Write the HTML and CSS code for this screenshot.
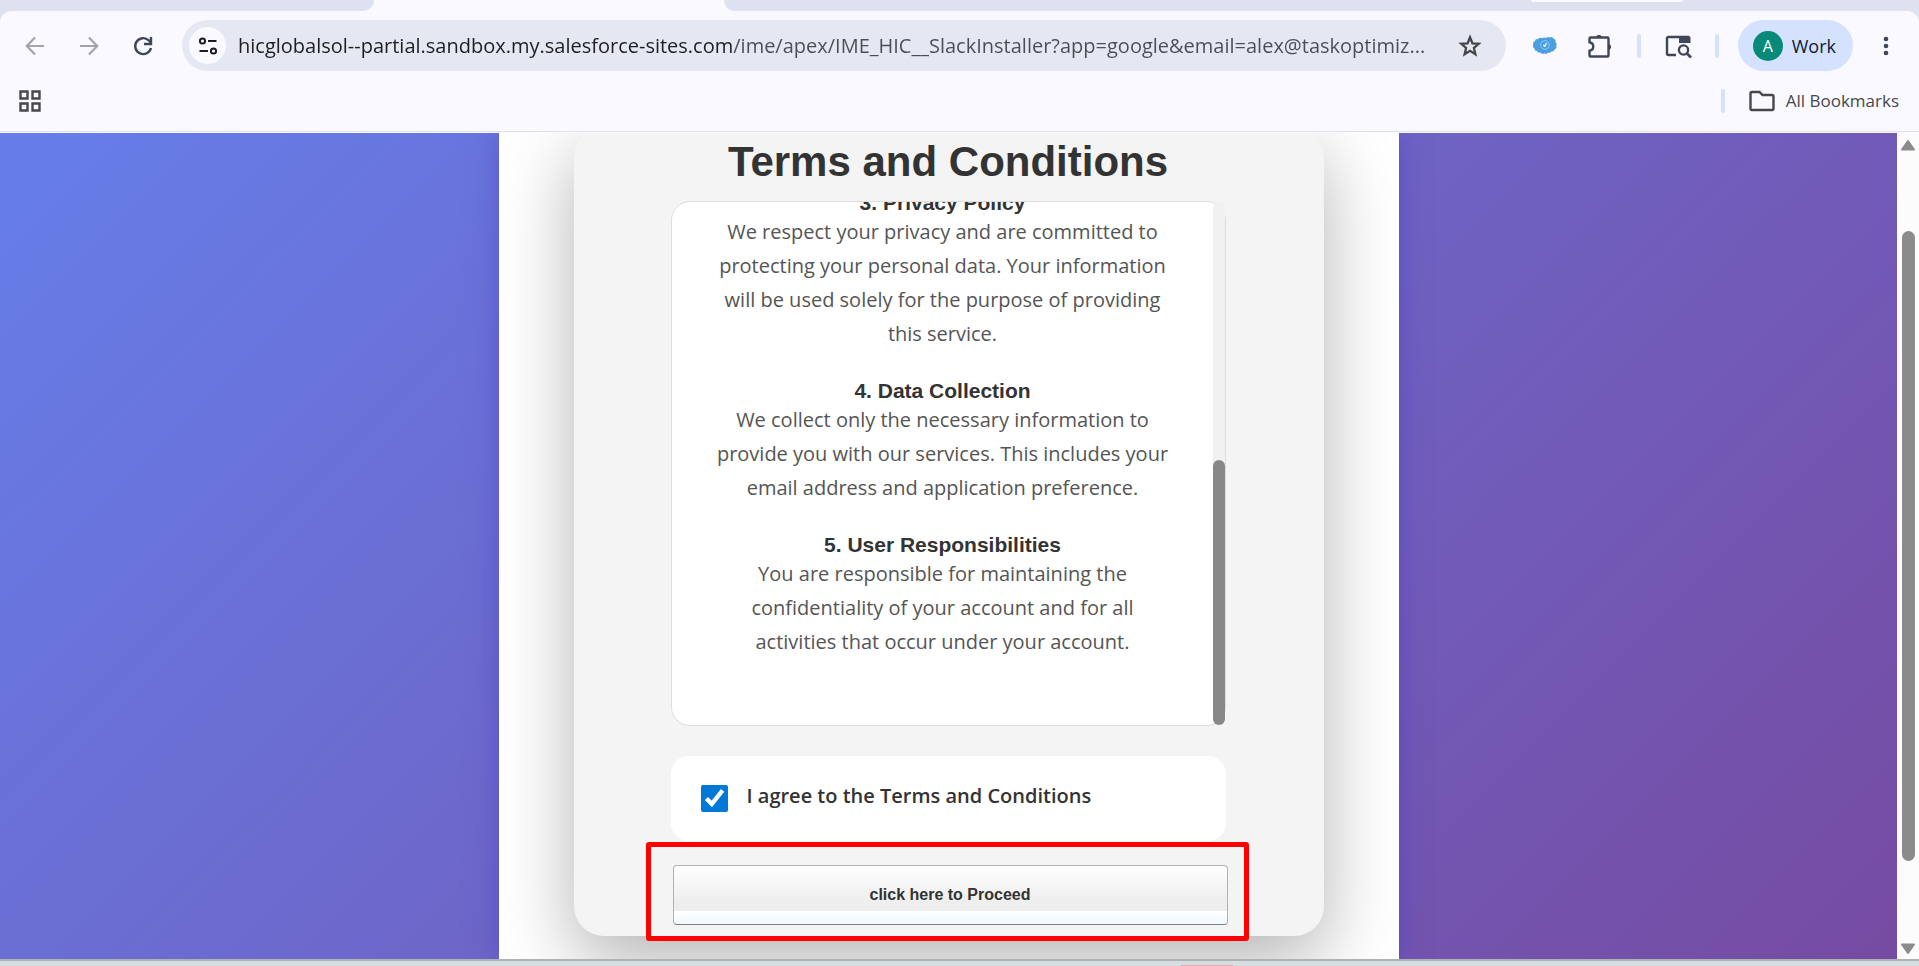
FILE: index.html
```html
<!DOCTYPE html>
<html lang="en">
<head>
<meta charset="utf-8">
<title>Terms and Conditions</title>
<link rel="stylesheet" href="styles.css">
</head>
<body>
<header class="browser">
  <div class="tab-strip">
    <div class="tab tab-left"></div>
    <div class="tab-active"></div>
    <div class="tab tab-right"><span class="tab-notch"></span></div>
  </div>
  <div class="chrome">
    <nav class="toolbar" aria-label="Browser toolbar">
      <div class="nav-buttons">
        <button class="icon-button muted" aria-label="Back"><svg width="20" height="20" viewBox="0 0 20 20" fill="none" stroke="currentColor" stroke-width="2.200"><path d="M19 10H2M10 1.500 1.800 10 10 18.500"/></svg></button>
        <button class="icon-button muted" aria-label="Forward"><svg width="20" height="20" viewBox="0 0 20 20" fill="none" stroke="currentColor" stroke-width="2.200"><path d="M1 10h17M10 1.500 18.200 10 10 18.500"/></svg></button>
        <button class="icon-button" aria-label="Reload"><svg width="20" height="20" viewBox="0 0 20 20" fill="none" stroke="currentColor" stroke-width="2.400"><path d="M18 12a8 8 0 1 1-2.300-7.700L18 6.800"/><path d="M18 1v7h-7"/></svg></button>
      </div>
      <div class="omnibox">
        <button class="site-info" aria-label="View site information"><svg width="20" height="20" viewBox="0 0 20 20" fill="none" stroke="currentColor" stroke-width="2"><circle cx="4.500" cy="5" r="2.600"/><path d="M10 5h8.500M1.500 15H10"/><circle cx="15.500" cy="15" r="2.600"/></svg></button>
        <input class="url" type="text" aria-label="Address" value="hicglobalsol--partial.sandbox.my.salesforce-sites.com/ime/apex/IME_HIC__SlackInstaller?app=google&amp;email=alex@taskoptimiz...">
        <button class="icon-button star" aria-label="Bookmark this page"><svg width="24" height="24" viewBox="0 0 24 24" fill="none" stroke="currentColor" stroke-width="2.300"><path d="m12 3.300 2.400 6 6.400.5-4.900 4.200 1.500 6.300-5.400-3.400-5.400 3.400 1.500-6.300-4.900-4.200 6.400-.5z"/></svg></button>
      </div>
      <div class="tools">
        <button class="icon-button" aria-label="Extension"><svg width="26" height="20" viewBox="0 0 26 20"><path d="M3 5Q3.500 2.500 6 3.200 7.500 1 10 2.200 12 .8 14 2 16 .3 18 1.500 20.500.3 21.500 2.800 24 3.300 23.500 6 25.500 7.800 24.300 10 25 12.500 22.500 13.500 22 16 19.500 15.500 18 17.500 16 16.500 14.500 19 12.500 17.300 10 18.800 8.500 16.600 6 17.300 5 15 2.500 15 2.500 12.500.3 11.300 1.300 9 .3 6.300 3 5z" fill="#4a9fe0"/><circle cx="13" cy="9" r="4.300" fill="none" stroke="#8ec8f2"/><path d="M11 9.500h2.500M12.500 11l2-4" stroke="#d8edfb" stroke-width="1.500"/></svg></button>
        <button class="icon-button" aria-label="Extensions"><svg width="26" height="26" viewBox="0 0 26 26"><path d="M3.500 4.500h17a1 1 0 0 1 1 1v17a1 1 0 0 1-1 1h-17a1 1 0 0 1-1-1v-4.700c5-1 5-7.600 0-8.600V5.500a1 1 0 0 1 1-1z" fill="none" stroke="currentColor" stroke-width="2.400"/><path d="M9.500 4a2.700 2.700 0 0 1 5 0zM22 11.500a2.700 2.700 0 0 1 0 5z" fill="currentColor" stroke="currentColor"/></svg></button>
        <span class="divider"></span>
        <button class="icon-button" aria-label="Search tabs"><svg width="26" height="24" viewBox="0 0 26 24" fill="none" stroke="currentColor" stroke-width="2.400"><path d="M11 21H3.500A1.500 1.500 0 0 1 2 19.500v-15A1.500 1.500 0 0 1 3.500 3H24"/><path d="M14 2h9.500a2 2 0 0 1 2 2v5H14z" fill="currentColor" stroke="none"/><circle cx="18.500" cy="16" r="4.600"/><path d="m22 19.500 4 4" stroke-width="2.600"/></svg></button>
        <span class="divider"></span>
        <button class="profile"><span class="avatar">A</span>Work</button>
      </div>
      <button class="icon-button menu" aria-label="Menu"><svg width="6" height="20" viewBox="0 0 6 20" fill="currentColor"><circle cx="3" cy="3" r="2.300"/><circle cx="3" cy="10" r="2.300"/><circle cx="3" cy="17" r="2.300"/></svg></button>
    </nav>
    <nav class="bookmarks" aria-label="Bookmarks">
      <button class="icon-button apps" aria-label="Apps"><svg width="22" height="22" viewBox="0 0 22 22" fill="none" stroke="currentColor" stroke-width="2.400"><path d="M1.500 1.500h7v7h-7zM13.500 1.500h7v7h-7zM1.500 13.500h7v7h-7zM13.500 13.500h7v7h-7z"/></svg></button>
      <span class="divider"></span>
      <button class="all-bookmarks"><svg width="26" height="22" viewBox="0 0 26 22" fill="none" stroke="currentColor" stroke-width="2.400"><path d="M3 2h7.500l3 3H23a1.500 1.500 0 0 1 1.500 1.500v12A1.500 1.500 0 0 1 23 20H3a1.500 1.500 0 0 1-1.500-1.500v-15A1.500 1.500 0 0 1 3 2z"/></svg>All Bookmarks</button>
    </nav>
  </div>
</header>

<div class="viewport">
  <main class="page">
    <div class="column">
      <form class="card">
        <h1>Terms and Conditions</h1>
        <section class="terms">
          <div class="terms-text">
            <h2>3. Privacy Policy</h2>
            <p>We respect your privacy and are committed to protecting your personal data. Your information will be used solely for the purpose of providing this service.</p>
            <h2>4. Data Collection</h2>
            <p>We collect only the necessary information to provide you with our services. This includes your email address and application preference.</p>
            <h2>5. User Responsibilities</h2>
            <p>You are responsible for maintaining the confidentiality of your account and for all activities that occur under your account.</p>
          </div>
          <div class="terms-scroll"><div class="terms-thumb"></div></div>
        </section>
        <div class="agree">
          <input type="checkbox" id="agree" checked>
          <label for="agree">I agree to the Terms and Conditions</label>
        </div>
        <div class="proceed">
          <button type="button" class="proceed-button">click here to Proceed</button>
          <span class="highlight"></span>
        </div>
      </form>
    </div>
  </main>
  <div class="page-scroll">
    <svg width="16" height="12" viewBox="0 0 16 12"><path d="M8 2 14 10.500H2z" fill="#8b8b8b" stroke="#8b8b8b" stroke-width="2" stroke-linejoin="round"/></svg>
    <div class="page-track"><div class="page-thumb"></div></div>
    <svg width="16" height="12" viewBox="0 0 16 12"><path d="M8 10 14 1.500H2z" fill="#8b8b8b" stroke="#8b8b8b" stroke-width="2" stroke-linejoin="round"/></svg>
  </div>
</div>
<footer class="desktop-edge"><span class="edge-mark"></span></footer>
</body>
</html>
```

FILE: styles.css
```css
* { box-sizing: border-box; }

body {
  margin: 0;
  height: 100vh;
  display: flex;
  flex-direction: column;
  overflow: hidden;
  font-family: "Open Sans", "Noto Sans", sans-serif;
  color: #333;
}

button { border: 0; padding: 0; background: none; font: inherit; color: inherit; }
svg { display: block; flex: none; overflow: visible; }

/* Browser frame */
.browser { background: #dee1ef; border-bottom: 1px solid #fafafc; flex: none; }
.tab-strip { display: flex; height: 11px; background: #faf9ff; }
.tab { background: #dee1ef; }
.tab-left { width: 374px; border-bottom-right-radius: 12px; }
.tab-active { width: 350px; }
.tab-right { flex: 1; border-bottom-left-radius: 12px; display: flex; justify-content: flex-end; }
.tab-notch { width: 152px; height: 2px; margin-right: 236px; background: #faf9ff; border-radius: 0 0 8px 8px; }
.chrome { background: #faf9ff; border-radius: 12px 12px 0 0; border-bottom: 1px solid #dfe0ea; height: 121px; }

.toolbar { display: flex; align-items: center; padding: 9px 15px 0 17px; color: #404659; }
.nav-buttons { display: flex; gap: 18px; }
.icon-button { display: flex; align-items: center; justify-content: center; width: 36px; height: 36px; }
.muted { color: #a3a4aa; }
.omnibox {
  flex: 1;
  display: flex;
  align-items: center;
  height: 51px;
  margin: 0 21px;
  padding: 0 18px 0 7px;
  border-radius: 26px;
  background: #e5e8f3;
}
.site-info { display: flex; align-items: center; justify-content: center; width: 37px; height: 37px; border-radius: 50%; background: #faf9ff; color: #1c1e24; flex: none; }
.url {
  flex: 1;
  min-width: 0;
  height: 36px;
  margin-left: 12px;
  padding: 0;
  border: 0;
  outline: 0;
  font: 20px "Open Sans", "Noto Sans", sans-serif;
  background: linear-gradient(90deg, #1c1e24 494px, #4a4d55 494px);
  background-clip: text;
  -webkit-background-clip: text;
  color: transparent;
}
.star { color: #44464c; }
.tools { display: flex; align-items: center; gap: 19px; }
.menu { margin-left: 15px; }
.divider { width: 4px; height: 24px; border-radius: 2px; background: #d5e2ff; }
.profile { display: flex; align-items: center; gap: 9px; height: 51px; padding: 0 17px 0 15px; border-radius: 26px; background: #d5e2ff; color: #0b1b3b; font-size: 18px; }
.avatar { width: 30px; height: 30px; border-radius: 50%; background: #078a77; color: #fff; font-size: 16px; line-height: 30px; text-align: center; }

.bookmarks { display: flex; align-items: center; gap: 24px; height: 60px; padding: 0 20px 0 12px; color: #47484d; }
.apps { margin-right: auto; }
.all-bookmarks { display: flex; align-items: center; gap: 11px; font-size: 17px; line-height: 24px; }

/* Page */
.viewport { flex: 1; min-height: 0; display: flex; }
.page { flex: 1; display: flex; justify-content: center; overflow: hidden; background: linear-gradient(135deg, #667eea 0%, #764ba2 100%); }
.column { width: 900px; overflow: hidden; background: #fff; box-shadow: 0 0 25px rgba(70, 60, 190, 0.5); padding: 0 75px; }
.card {
  margin-top: -6px;
  padding: 11px 98px 11px 97px;
  border-radius: 30px;
  background: #f4f4f4;
  box-shadow: 0 25px 75px rgba(0, 0, 0, 0.3);
}
h1, h2 { margin: 0; font-family: "Liberation Sans", Arial, sans-serif; text-align: center; color: #333; }
h1 { font-size: 42px; line-height: 48px; }
.terms {
  display: flex;
  height: 525px;
  margin-top: 15px;
  border: 1px solid #ddd;
  border-radius: 19px;
  background: #fff;
}
.terms-text { flex: 1; display: flex; flex-direction: column; justify-content: flex-end; overflow: hidden; padding: 0 39px 66px 40px; border-radius: 18px 0 0 18px; text-align: center; }
.terms h2 { font-size: 21px; line-height: 25px; }
.terms p { margin: 0 0 27px; font-size: 20px; line-height: 34px; color: #555; }
.terms p:last-child { margin-bottom: 0; }
.terms-scroll { display: flex; align-items: flex-end; width: 12px; border-radius: 6px; background: #f1f1f1; }
.terms-thumb { width: 12px; height: 265px; border-radius: 6px; background: #888; }

.agree { display: flex; align-items: center; gap: 19px; height: 85px; margin-top: 30px; padding: 0 30px; border-radius: 18px; background: #fff; font-size: 20px; font-weight: 600; }
.agree input { width: 27px; height: 27px; margin: 0; accent-color: #0078d7; }
.agree label { padding-bottom: 6px; }

.proceed { position: relative; margin: 24px -2px 0 2px; }
.proceed-button {
  display: block;
  width: 100%;
  height: 60px;
  border: 1px solid #b1b1b1;
  border-bottom-color: #7f7f7f;
  border-radius: 4px;
  background: linear-gradient(#fff 0%, #eee 60%, #eee 77%, #fff 77%, #f0f8ff 100%);
  font: bold 16px "Liberation Sans", Arial, sans-serif;
  color: #333;
}
.highlight { position: absolute; inset: -23px -21px -16px -27px; border: 5px solid #f00; border-radius: 3px; pointer-events: none; }

.page-scroll { display: flex; flex-direction: column; align-items: center; width: 22px; padding: 6px 0 4px; background: #fcfcfc; }
.page-track { flex: 1; padding: 80px 0; }
.page-thumb { width: 13px; height: 630px; border-radius: 7px; background: #8b8b8b; }

.desktop-edge { display: flex; align-items: flex-end; flex: none; height: 7px; border-top: 2px solid #adb3b5; background: #d6dee1; padding-left: 1181px; }
.edge-mark { width: 52px; height: 1px; background: #e8aaa8; }
```
